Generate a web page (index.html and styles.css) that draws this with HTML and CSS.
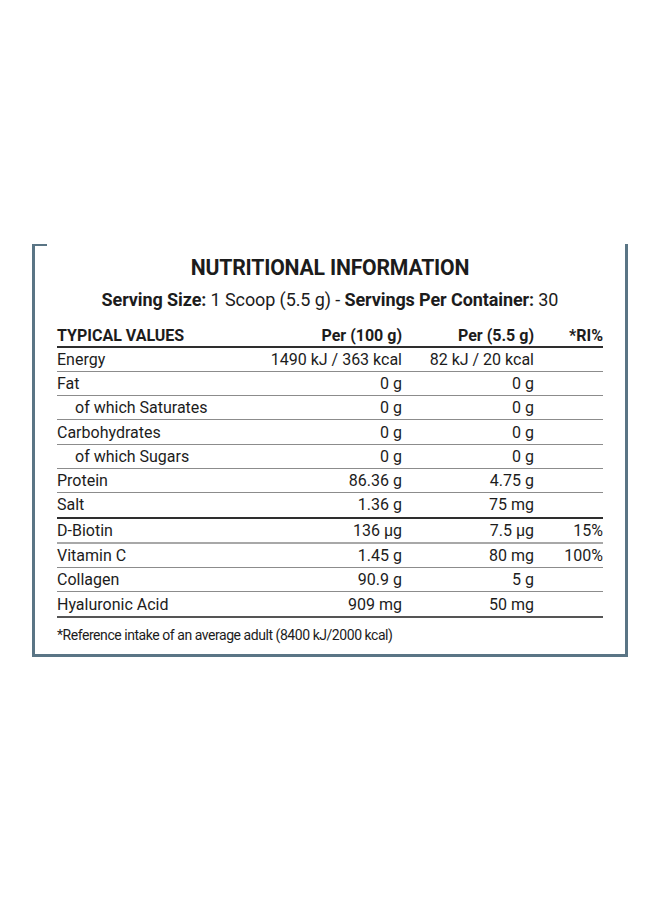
FILE: index.html
```html
<!DOCTYPE html>
<html lang="en">
<head>
<meta charset="utf-8">
<title>Nutritional Information</title>
<link rel="stylesheet" href="styles.css">
</head>
<body>
<div class="panel">
  <h1 class="title">NUTRITIONAL INFORMATION</h1>
  <p class="serving"><b>Serving Size:</b> 1 Scoop (5.5 g) - <b>Servings Per Container:</b> 30</p>
  <div class="facts">
    <div class="row head thick">
      <span class="lbl">TYPICAL VALUES</span><span>Per (100 g)</span><span>Per (5.5 g)</span><span>*RI%</span>
    </div>
    <div class="row"><span class="lbl">Energy</span><span>1490 kJ / 363 kcal</span><span>82 kJ / 20 kcal</span><span></span></div>
    <div class="row"><span class="lbl">Fat</span><span>0 g</span><span>0 g</span><span></span></div>
    <div class="row"><span class="lbl sub">of which Saturates</span><span>0 g</span><span>0 g</span><span></span></div>
    <div class="row"><span class="lbl">Carbohydrates</span><span>0 g</span><span>0 g</span><span></span></div>
    <div class="row"><span class="lbl sub">of which Sugars</span><span>0 g</span><span>0 g</span><span></span></div>
    <div class="row"><span class="lbl">Protein</span><span>86.36 g</span><span>4.75 g</span><span></span></div>
    <div class="row thick"><span class="lbl">Salt</span><span>1.36 g</span><span>75 mg</span><span></span></div>
    <div class="row light"><span class="lbl">D-Biotin</span><span>136 µg</span><span>7.5 µg</span><span>15%</span></div>
    <div class="row"><span class="lbl">Vitamin C</span><span>1.45 g</span><span>80 mg</span><span>100%</span></div>
    <div class="row"><span class="lbl">Collagen</span><span>90.9 g</span><span>5 g</span><span></span></div>
    <div class="row last"><span class="lbl">Hyaluronic Acid</span><span>909 mg</span><span>50 mg</span><span></span></div>
  </div>
  <p class="note">*Reference intake of an average adult (8400 kJ/2000 kcal)</p>
</div>
</body>
</html>
```
FILE: styles.css
```css
html, body {
  margin: 0;
  padding: 0;
  background: #ffffff;
}
body {
  font-family: Roboto, "Liberation Sans", sans-serif;
  color: #1c1c1c;
  padding-top: 244px;
}
.panel {
  position: relative;
  margin-left: 32px;
  border-left: 3px solid #5a7585;
  border-right: 3px solid #5a7585;
  border-bottom: 3px solid #5a7585;
  padding: 12px 0 10px 22px;
  box-sizing: content-box;
  width: 568px;
}
.panel::before {
  content: "";
  position: absolute;
  left: -3px;
  top: 0;
  width: 15px;
  height: 2px;
  background: #5a7585;
}
.title {
  margin: 0;
  text-align: center;
  font-size: 21.2px;
  font-weight: 700;
  letter-spacing: -0.2px;
  line-height: 24px;
  padding-right: 22px;
}
.serving {
  margin: 9px 0 0;
  text-align: center;
  font-size: 18px;
  line-height: 22px;
  letter-spacing: -0.1px;
  padding-right: 22px;
}
.serving b { font-weight: 700; }
.facts {
  margin-top: 14px;
  width: 546px;
  font-size: 16px;
}
.row {
  display: grid;
  grid-template-columns: 1fr 150px 132px 69px;
  align-items: center;
  height: 23.3px;
  border-bottom: 1px solid #8c8c8c;
}
.row span { text-align: right; white-space: nowrap; }
.row .lbl { text-align: left; }
.row .sub { padding-left: 18px; }
.row.head {
  font-weight: 700;
  font-size: 16px;
  height: 20.5px;
}
.row.thick {
  border-bottom: 2px solid #2e2e2e;
}
.row.light {
  border-bottom: 2px solid #a8a8a8;
}
.row.last {
  border-bottom: 2px solid #555;
}
.note {
  margin: 8px 0 0;
  font-size: 14px;
  line-height: 18px;
  letter-spacing: -0.45px;
}
```
